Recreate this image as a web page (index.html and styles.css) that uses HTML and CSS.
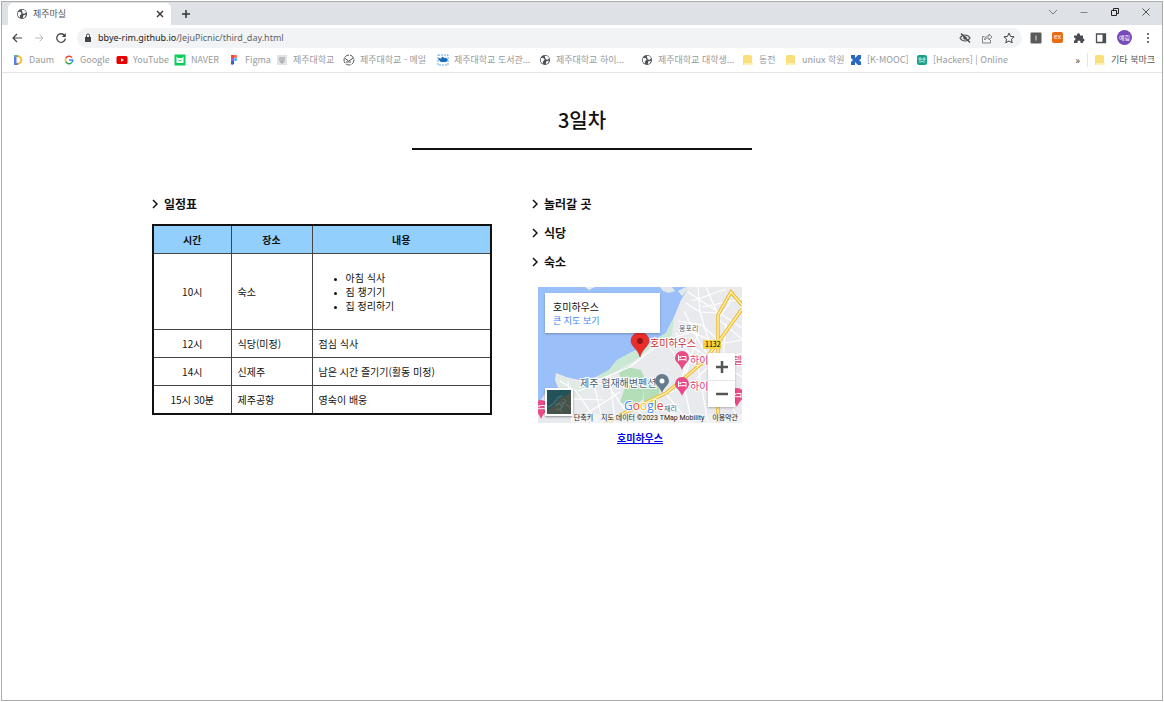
FILE: index.html
```html
<!DOCTYPE html>
<html lang="ko">
<head>
<meta charset="utf-8">
<title>제주마실</title>
<link rel="stylesheet" href="styles.css">
</head>
<body>
<svg class="sprite" aria-hidden="true">
  <symbol id="globe" viewBox="0 0 12 12"><circle cx="6" cy="6" r="5" fill="#4d5156"/><path d="M1.8 4.2 4 3.8l1.600 1.400L4.600 7 3.800 7.200 4.200 9.800 2 8zM5.600 1.800l2.600.1 2 2.200-1.400 1.700-2-.4zM7.400 7.200l2.600-.4-1.400 2.700-1.800.6z" fill="#fff"/></symbol>
  <symbol id="folder" viewBox="0 0 12 12"><path d="M2 1h6l2 1v9H1V2z" fill="#fbdf7d"/><path d="M2 9h9v2H2z" fill="#fff0b5"/></symbol>
  <symbol id="bed-pin" viewBox="0 0 14 20"><path d="M7 0a7 7 0 0 0-7 7c0 4 5 6 7 12 2-6 7-8 7-12a7 7 0 0 0-7-7z" fill="#e94a88"/><path d="M3.500 4v6M3.500 8.700h7.500V10M6.500 5.500H11v3" stroke="#fff" fill="none"/><circle cx="5.200" cy="6.200" r="1" fill="#fff"/></symbol>
</svg>
<div class="window">
  <header class="browser">
    <div class="tabs">
      <div class="tab">
        <svg class="icon"><use href="#globe"/></svg>
        <span class="tab-title">제주마실</span>
        <button class="plain" aria-label="탭 닫기"><svg class="glyph" viewBox="0 0 10 10"><path d="m2 2 6 6M8 2 2 8" stroke="#333" stroke-width="1.4"/></svg></button>
      </div>
      <button class="plain new-tab" aria-label="새 탭"><svg class="glyph" viewBox="0 0 10 10"><path d="M5 1v8M1 5h8" stroke="#333" stroke-width="1.5"/></svg></button>
      <div class="window-buttons">
        <button class="plain" aria-label="탭 검색"><svg class="glyph" viewBox="0 0 10 10"><path d="m1 3 4 4 4-4" stroke="#777" fill="none"/></svg></button>
        <button class="plain" aria-label="최소화"><svg class="glyph" viewBox="0 0 10 10"><path d="M1.500 5.500h7" stroke="#888"/></svg></button>
        <button class="plain" aria-label="이전 크기로"><svg class="glyph" viewBox="0 0 10 10"><path d="M1.500 3.500h5v5h-5zM3.500 3V1.500h5v5H7" stroke="#222" fill="none"/></svg></button>
        <button class="plain" aria-label="닫기"><svg class="glyph" viewBox="0 0 10 10"><path d="m1.500 1.500 7 7M8.500 1.500l-7 7" stroke="#444" stroke-width=".9"/></svg></button>
      </div>
    </div>
    <div class="toolbar">
      <button class="plain" aria-label="뒤로"><svg class="icon" viewBox="0 0 12 12"><path d="M11 6H2M6 2 2 6l4 4" stroke="#444" stroke-width="1.200" fill="none"/></svg></button>
      <button class="plain" aria-label="앞으로"><svg class="icon" viewBox="0 0 12 12"><path d="M2 6h8M6.500 2.500 10 6 6.500 9.500" stroke="#bbb" fill="none"/></svg></button>
      <button class="plain" aria-label="새로고침"><svg class="icon" viewBox="0 0 12 12"><path d="M9.500 3.500A4.300 4.300 0 1 0 10.300 6.500" stroke="#444" stroke-width="1.300" fill="none"/><path d="M10.800 1v4H6.800z" fill="#444"/></svg></button>
      <div class="address">
        <svg class="lock" viewBox="0 0 8 10"><path d="M1 4h6v5H1z" fill="#444"/><path d="M2.500 4V2.500a1.500 1.500 0 0 1 3 0V4" stroke="#444" fill="none"/></svg>
        <span class="url"><b>bbye-rim.github.io</b>/JejuPicnic/third_day.html</span>
        <button class="plain" aria-label="쿠키 차단됨"><svg class="icon" viewBox="0 0 12 12"><path d="M1 6c2.500-4 7.500-4 10 0-2.500 4-7.500 4-10 0z" stroke="#555" stroke-width="1.200" fill="none"/><circle cx="6" cy="6" r="1.800" fill="#555"/><path d="m2 1.500 9 9" stroke="#444" stroke-width="1.200"/></svg></button>
        <button class="plain" aria-label="공유"><svg class="icon" viewBox="0 0 12 12"><path d="M3.500 4.500H1.500V11h8V8M3.500 8c.4-3 2-4 4.500-4V2l3 3-3 3V6c-2 0-3.500.5-4.500 2z" stroke="#777" stroke-width=".9" fill="none"/></svg></button>
        <button class="plain" aria-label="북마크에 추가"><svg class="icon" viewBox="0 0 12 12"><path d="m6 1 1.500 3.400 3.600.4-2.700 2.400.8 3.600L6 9l-3.200 1.800.8-3.600L.9 4.800l3.600-.4z" stroke="#444" fill="none"/></svg></button>
      </div>
      <div class="extensions">
        <svg class="icon" viewBox="0 0 12 12"><rect x=".5" y=".5" width="11" height="11" rx="1" fill="#5a5a5a"/><path d="M6 3.500v5" stroke="#ddd"/></svg>
        <span class="ext-badge">ex</span>
        <svg class="icon" viewBox="0 0 12 12"><path d="M1 3.500h3a1.600 1.600 0 1 1 3 0h3v3a1.500 1.500 0 1 1 0 3v1.500H7.500V10a1.500 1.500 0 0 0-3 0v1H1V8.600a1.500 1.500 0 0 0 0-3z" fill="#4a4d51"/></svg>
        <svg class="icon" viewBox="0 0 12 12"><path d="M1.500 2h9v8.500h-9z" stroke="#4a4d51" stroke-width="1.300" fill="none"/><path d="M7.500 2h3v8.500h-3z" fill="#4a4d51"/></svg>
        <span class="avatar">예림</span>
        <svg class="icon" viewBox="0 0 12 12"><g fill="#444"><circle cx="6" cy="2" r="1"/><circle cx="6" cy="6" r="1"/><circle cx="6" cy="10" r="1"/></g></svg>
      </div>
    </div>
    <nav class="bookmarks" aria-label="북마크">
      <a href="#"><svg class="icon" viewBox="0 0 12 12"><path d="M2 1h2.500v10H2z" fill="#5b7fe8"/><path d="M4 2.200h1.500a3.800 3.800 0 0 1 0 7.600H4" stroke="#f6bf3c" stroke-width="2" fill="none"/><path d="M2 1h4v2H2z" fill="#55bd8f"/><path d="M2 9h4v2H2z" fill="#5b7fe8"/></svg><span>Daum</span></a>
      <a href="#"><svg class="icon" viewBox="0 0 12 12"><g fill="none" stroke-width="1.500"><path d="M9 3.500A3.700 3.700 0 0 0 2.800 4.300" stroke="#ea4335"/><path d="M2.800 4.300a3.700 3.700 0 0 0 0 3.400" stroke="#fbbc05"/><path d="M2.800 7.700A3.700 3.700 0 0 0 8.600 8.700" stroke="#34a853"/><path d="M8.600 8.700c.9-.8 1.100-1.700 1.100-2.700H6" stroke="#4285f4"/></g></svg><span>Google</span></a>
      <a href="#"><svg class="icon" viewBox="0 0 12 12"><rect x=".5" y="2" width="11" height="8" rx="1.500" fill="#e80000"/><path d="m5 4.200 3 1.800-3 1.800z" fill="#fff"/></svg><span>YouTube</span></a>
      <a href="#"><svg class="icon" viewBox="0 0 12 12"><path d="M.5.5h11v11H.5z" fill="#06cf5c"/><path d="M2.500 2.500 4 4h4l1.500-1.500V9h-7z" fill="#fff"/><path d="m4.500 6 1.500 1 1.500-1" stroke="#06cf5c" fill="none"/></svg><span>NAVER</span></a>
      <a href="#"><svg class="icon" viewBox="0 0 12 12"><path d="M3 1h3v3H3z" fill="#f24e1e"/><path d="M6 1h3v3H6z" fill="#ff7262"/><path d="M3 4h3v3H3z" fill="#a259ff"/><circle cx="7.500" cy="5.500" r="1.500" fill="#1abcfe"/><path d="M3 7h3v3l-2 1-1-1z" fill="#3f62b8"/></svg><span>Figma</span></a>
      <a href="#"><svg class="icon" viewBox="0 0 12 12"><path d="M1 1h10v10H1z" fill="#e1e3e5"/><path d="M4 3v4q2 4 4 0V3M6 3v6" stroke="#999" fill="none"/></svg><span>제주대학교</span></a>
      <a href="#"><svg class="icon" viewBox="0 0 12 12"><circle cx="6" cy="6" r="5" stroke="#555" stroke-dasharray="5 1" fill="none"/><path d="m1.500 4 4 3 5-3M3 8h5" stroke="#555" fill="none"/></svg><span>제주대학교 - 메일</span></a>
      <a href="#"><svg class="icon" viewBox="0 0 12 12"><rect x="1" y="1" width="10" height="10" fill="none" stroke="#60a9e7" stroke-dasharray="2 1"/><path d="M1 5q2-2 3 0 1-4 3-1 2-1 4 2L9 8H4z" fill="#176bc0"/></svg><span>제주대학교 도서관...</span></a>
      <a href="#"><svg class="icon"><use href="#globe"/></svg><span>제주대학교 하이...</span></a>
      <a href="#"><svg class="icon"><use href="#globe"/></svg><span>제주대학교 대학생...</span></a>
      <a href="#"><svg class="icon"><use href="#folder"/></svg><span>동전</span></a>
      <a href="#"><svg class="icon"><use href="#folder"/></svg><span>uniux 학원</span></a>
      <a href="#"><svg class="icon" viewBox="0 0 12 12"><path d="M1 1h4v3l3-3h3v4L9 6l2 2v3H8L5 8v3H1V8l2-2-2-2z" fill="#2868bd"/></svg><span>[K-MOOC]</span></a>
      <a href="#"><svg class="icon" viewBox="0 0 12 12"><rect x="1" y="1" width="10" height="10" rx="2" fill="#19a38a"/><path d="M3 4h2v2H3zM7 4h2v2H7zM3 8h2l1-1 1 1h2" stroke="#d6f6ec" stroke-width=".8" fill="none"/></svg><span>[Hackers] | Online</span></a>
      <button class="plain more" aria-label="북마크 더보기">»</button>
      <a class="other" href="#"><svg class="icon"><use href="#folder"/></svg><span>기타 북마크</span></a>
    </nav>
  </header>
  <main class="page">
    <h1>3일차</h1>
    <div class="columns">
      <section>
        <h2><svg class="chevron" viewBox="0 0 6 10"><path d="m1 1 4 4-4 4"/></svg>일정표</h2>
        <table class="schedule">
          <colgroup><col class="col-time"><col class="col-place"><col></colgroup>
          <thead><tr><th scope="col">시간</th><th scope="col">장소</th><th scope="col">내용</th></tr></thead>
          <tbody>
            <tr><td>10시</td><td>숙소</td><td><ul><li>아침 식사</li><li>짐 챙기기</li><li>집 정리하기</li></ul></td></tr>
            <tr><td>12시</td><td>식당(미정)</td><td>점심 식사</td></tr>
            <tr><td>14시</td><td>신제주</td><td>남은 시간 즐기기(활동 미정)</td></tr>
            <tr><td>15시 30분</td><td>제주공항</td><td>영숙이 배웅</td></tr>
          </tbody>
        </table>
      </section>
      <section>
        <h2><svg class="chevron" viewBox="0 0 6 10"><path d="m1 1 4 4-4 4"/></svg>놀러갈 곳</h2>
        <h2><svg class="chevron" viewBox="0 0 6 10"><path d="m1 1 4 4-4 4"/></svg>식당</h2>
        <h2><svg class="chevron" viewBox="0 0 6 10"><path d="m1 1 4 4-4 4"/></svg>숙소</h2>
        <figure class="lodging">
          <div class="map">
            <svg class="map-art" viewBox="0 0 204 136">
              <path d="M0 0h204v136H0z" fill="#e8eaed"/>
              <path d="M0 0H47L51 3 57 0H151L143 13 136 30 128 46 107 59 94 65 79 73 71 83 58 90 41 93 28 90 18 86 17 93 21 103 8 105 0 118z" fill="#9bbff9"/>
              <path d="M122 0h12l3 4-6 2-6-2zM148 0l-8 4 4 5 8-9z" fill="#e1e8e9"/>
              <path d="m136 30-8 16-21 13-13 6-15 8-8 10-13 7 7 2 14-8 17-10 17-14 21-12z" fill="#c9e9d2"/>
              <path d="m81 86 8-6 14 3 4 9-2 20-10 9-13-6 5-15zM106 94l10-3 6 13-4 12-12 6z" fill="#b4deb8"/>
              <path d="M18 87 35 94 52 102 34 110 22 102z" fill="#e0ebe4"/>
              <g fill="none" stroke="#fff" stroke-width="1.200">
                <path d="M60 93 92 80 112 64 130 52M22 94l16 10 22 32M30 94l4 42M0 128l34-16 32 1M55 93l10 43M40 104l28-9 18 27M138 46l14 22-8 22 10 46M133 52l20-7 28 12 23-4M140 34l24 4 16 15M148 16l14 9 18 1M160 0l2 25 12 40M168 0l12 28M146 24l18 36 24 28M150 5l54 36M160 45l-12 42M130 58l18 26M111 112l20 12 16 12M122 100l30 36M130 106l44-14M160 80l10 56M188 36l-4 50 16 50M192 16l-12 16 24 20M204 66l-28 8-18 18M100 124l14 12M140 96l64 18M145 55l59 35M164 20l40-8M188 2l-34 12M72 88l5 48M82 105l-34 22"/>
              </g>
              <g fill="none" stroke="#edb72c" stroke-width="3.500"><path d="M67 137 88 125 128 106 150 88 164 76 179 57 204 22M180 136V28L193 5 204 18"/></g>
              <g fill="none" stroke="#fff0a5" stroke-width="1.500"><path d="M67 137 88 125 128 106 150 88 164 76 179 57 204 22M180 136V28L193 5 204 18"/></g>
              <rect x="165" y="53" width="18" height="9" rx="1" fill="#f5d33c"/>
              <text class="map-number" x="167" y="60">1132</text>
              <text class="map-town" x="141" y="44">옹포리</text>
              <text class="map-town" x="126" y="124">재리</text>
              <text class="map-hotel" x="152" y="77">하이</text><text class="map-hotel" x="195" y="77">텔</text>
              <text class="map-hotel" x="152" y="103">하이</text>
              <text class="map-lodge" x="42" y="100">제주 협재해변펜션</text>
              <text class="map-place" x="112" y="60">호미하우스</text>
              <use href="#bed-pin" x="137" y="64" width="14" height="20"/><use href="#bed-pin" x="137" y="90" width="14" height="20"/><use href="#bed-pin" x="192" y="101" width="14" height="20"/><use href="#bed-pin" x="-4" y="113" width="14" height="20"/>
              <path d="M124 87a7 7 0 0 0-7 7c0 4 5 6 7 12 2-6 7-8 7-12a7 7 0 0 0-7-7z" fill="#647b8e"/><circle cx="124" cy="94" r="2.500" fill="#fff"/>
              <path d="M102 45a9 9 0 0 0-9 9c0 5 7 8 9 16 2-8 9-11 9-16a9 9 0 0 0-9-9z" fill="#ea2f2b" stroke="#bb302d" stroke-width=".6"/><circle cx="102" cy="54" r="3" fill="#8e1715"/>
              <text class="google" x="86" y="123"><tspan fill="#4285f4">G</tspan><tspan fill="#ea4335">o</tspan><tspan fill="#fbbc05">o</tspan><tspan fill="#4285f4">g</tspan><tspan fill="#34a853">l</tspan><tspan fill="#ea4335">e</tspan></text>
            </svg>
            <div class="map-card"><strong>호미하우스</strong><a href="#">큰 지도 보기</a></div>
            <button class="satellite" aria-label="위성 지도"><svg viewBox="0 0 25 25"><path d="M0 0h25v25H0z" fill="#24525b"/><path d="m0 22 7-6 5-6 5-3 8-5v23H0z" fill="#46534a"/><path d="m1 18 6-4 4-6 5-2M9 16l4-2 2 3M14 20l5-8" stroke="#54828a" fill="none"/><path d="m17 9 3 3m-8 7 4 4m4-8 4 3M9 20l3 1m3-9 2 3" stroke="#77705a"/></svg></button>
            <div class="map-zoom"><button aria-label="확대"><svg viewBox="0 0 12 12"><path d="M6 0v12M0 6h12"/></svg></button><button aria-label="축소"><svg viewBox="0 0 12 12"><path d="M0 6h12"/></svg></button></div>
            <div class="map-terms"><span>단축키</span><span>지도 데이터 ©2023 TMap Mobility</span><span>이용약관</span></div>
          </div>
          <figcaption><a href="#">호미하우스</a></figcaption>
        </figure>
      </section>
    </div>
  </main>
</div>
</body>
</html>
```
FILE: styles.css
```css
* { box-sizing: border-box; }
body { margin: 0; padding: 1px; background: #fff; color: #111; font: 10px/14px "Noto Sans CJK KR", sans-serif; }
.sprite { position: absolute; width: 0; height: 0; }
.window { min-height: calc(100vh - 2px); border: 1px solid #a9abad; }
svg { display: block; flex: none; }
.plain { display: flex; align-items: center; justify-content: center; padding: 0; border: 0; background: none; color: #444; font: inherit; }
.icon { width: 12px; height: 12px; }
.glyph { width: 10px; height: 10px; }

.tabs { display: flex; align-items: flex-end; height: 23px; padding-left: 6px; background: #dee1e6; }
.tab { display: flex; align-items: center; gap: 5px; width: 163px; height: 22px; padding: 0 6px 0 8px; border-radius: 5px 5px 0 0; background: #fff; }
.tab-title { flex: 1; color: #555; font-size: 9px; }
.new-tab { height: 22px; margin-left: 10px; }
.window-buttons { display: flex; gap: 21px; margin-left: auto; padding: 0 11px 8px 0; }
.toolbar { display: flex; align-items: center; gap: 10px; height: 25px; padding: 0 9px; }
.address { display: flex; flex: 1; align-items: center; gap: 10px; height: 20px; padding: 0 7px 0 7px; border-radius: 10px; background: #f1f3f4; }
.lock { width: 8px; height: 10px; }
.url { flex: 1; margin-left: -4px; color: #5f6368; font: 9px/14px "Noto Sans", sans-serif; }
.url b { color: #222; font-weight: 400; }
.extensions { display: flex; align-items: center; gap: 10px; margin-right: -1px; }
.toolbar .address { margin-right: -2px; }
.ext-badge { width: 11px; height: 11px; border-radius: 2px; background: #e96b16; color: #fff; font: 7px/10px "Open Sans", sans-serif; text-align: center; }
.avatar { width: 15px; height: 15px; border-radius: 50%; background: #7849b8; color: #fff; font-size: 6px; line-height: 15px; text-align: center; }
.bookmarks { display: grid; grid-template-columns: 51px 53px 58px 54px 48px 67px 94px 102px 102px 101px 43px 65px 66px 110px 1fr auto; align-items: center; height: 23px; padding: 0 7px 2px 10px; border-bottom: 1px solid #e3e5e8; }
.bookmarks a { display: flex; align-items: center; gap: 5px; overflow: hidden; color: #96999d; font-size: 9px; text-decoration: none; white-space: nowrap; }
.bookmarks .more { justify-self: end; margin-right: 7px; }
.bookmarks .other { padding-left: 6px; border-left: 1px solid #e3e5e8; color: #555; }

.page { padding: 31px 0; }
h1 { width: 340px; margin: 0 auto; padding-bottom: 12px; border-bottom: 2px solid #111; font-size: 20px; font-weight: 500; line-height: 32px; text-align: center; }
.columns { display: grid; grid-template-columns: 340px 1fr; gap: 40px; max-width: 860px; margin: 0 auto; padding-top: 40px; }
h2 { display: flex; align-items: center; gap: 6px; margin: 0 0 1px; font-size: 12px; font-weight: 700; line-height: 28px; }
.chevron { width: 6px; height: 10px; fill: none; stroke: #111; stroke-width: 1.5; }
.schedule { width: 100%; margin-top: 6px; border: 2px solid #111; border-collapse: collapse; table-layout: fixed; }
.col-time { width: 78px; }
.col-place { width: 81px; }
th, td { padding: 7px 6px 6px; border: 1px solid #444; text-align: left; }
th { background: #92cffc; font-weight: 700; text-align: center; }
td:first-child { text-align: center; }
.schedule ul { margin: 10px 0; padding-left: 27px; }
.schedule li::marker { font-size: 7px; }

.lodging { width: 204px; margin: 11px 6px; text-align: center; }
.map { position: relative; overflow: hidden; text-align: left; }
.map-art { width: 100%; height: auto; }
.map-art text { font-family: "Noto Sans CJK KR", sans-serif; font-size: 10px; paint-order: stroke; stroke: #fff; stroke-width: 2px; }
.map-art .map-number { font-size: 7px; stroke: none; }
.map-art .map-town { font-size: 7px; fill: #555; }
.map-art .map-hotel { fill: #d43b7a; }
.map-art .map-lodge { fill: #4b6272; }
.map-art .map-place { fill: #c22f2f; }
.map-art .google { font: 500 12px "Open Sans", sans-serif; }
.map-card { position: absolute; top: 6px; left: 7px; width: 115px; padding: 7px 8px 5px; background: #fff; box-shadow: 0 1px 2px #0004; }
.map-card strong, .map-card a { display: block; font-weight: 400; }
.map-card a { color: #4285f4; font-size: 9px; text-decoration: none; }
.satellite { position: absolute; bottom: 7px; left: 7px; width: 28px; height: 28px; padding: 0; border: 2px solid #fff; background: #244e59; box-shadow: 0 1px 2px #0006; }
.satellite svg { width: 100%; }
.map-zoom { position: absolute; right: 7px; bottom: 16px; width: 27px; background: #fff; box-shadow: 0 1px 2px #0004; }
.map-zoom button { display: grid; place-items: center; width: 100%; height: 27px; padding: 0; border: 0; background: none; }
.map-zoom button + button { border-top: 1px solid #e6e6e6; }
.map-zoom svg { width: 12px; height: 12px; stroke: #555; stroke-width: 2.5; }
.map-terms { position: absolute; right: 0; bottom: 0; display: flex; gap: 8px; padding: 0 4px 0 2px; background: #f5f5f5b0; color: #222; font: 7px/9px Roboto, "Noto Sans CJK KR", sans-serif; white-space: nowrap; }
figcaption { padding-top: 8px; font-weight: 700; }
figcaption a { color: #0000ee; }
```
